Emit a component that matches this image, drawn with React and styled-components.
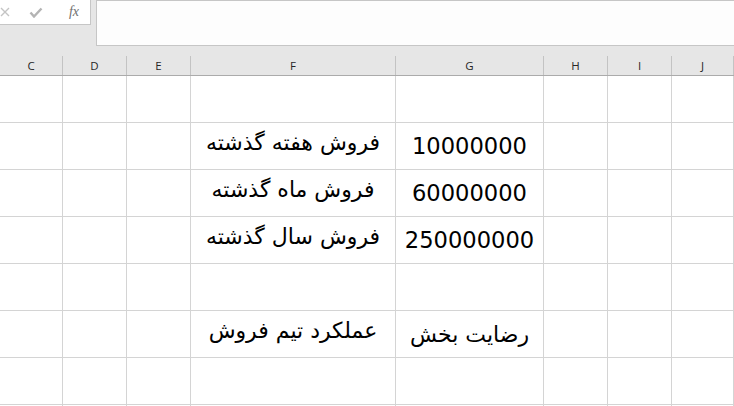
import React from 'react';
import styled, { createGlobalStyle } from 'styled-components';

const GlobalStyle = createGlobalStyle`
  html, body {
    margin: 0;
    padding: 0;
    background: #ffffff;
    overflow: hidden;
  }
`;

const columns = [
  { name: 'C', width: 63 },
  { name: 'D', width: 64 },
  { name: 'E', width: 64 },
  { name: 'F', width: 205 },
  { name: 'G', width: 148 },
  { name: 'H', width: 64 },
  { name: 'I', width: 64 },
  { name: 'J', width: 62 },
];

const template = columns.map((c) => `${c.width}px`).join(' ');

const rows = [
  {},
  { F: 'فروش هفته گذشته', G: '10000000' },
  { F: 'فروش ماه گذشته', G: '60000000' },
  { F: 'فروش سال گذشته', G: '250000000' },
  {},
  { F: 'عملکرد تیم فروش', G: 'رضایت بخش' },
  {},
  {},
];

const Sheet = styled.div`
  width: 734px;
  height: 406px;
  overflow: hidden;
  background: #ffffff;
`;

const FormulaArea = styled.div`
  display: flex;
  gap: 5px;
  height: 46px;
  background: #e6e6e6;
`;

const ButtonBox = styled.div`
  display: flex;
  align-items: center;
  width: 90px;
  height: 24px;
  background: #ffffff;
  border-right: 1px solid #c6c6c6;
  border-bottom: 1px solid #c6c6c6;
`;

const BarButton = styled.span`
  width: ${(p) => p.w || 34}px;
  display: flex;
  justify-content: center;
  align-items: center;
`;

const Fx = styled.span`
  font-family: 'Liberation Serif', 'DejaVu Serif', serif;
  font-style: italic;
  font-size: 14px;
  color: #707070;
`;

const FormulaInput = styled.div`
  flex: 1;
  height: 44px;
  background: #fdfdfd;
  border: 1px solid #c6c6c6;
  border-right: none;
`;

const Grid = styled.div`
  display: grid;
  grid-template-columns: ${template};
`;

const HeaderCell = styled.div`
  height: 19px;
  padding-top: 10px;
  background: #e6e6e6;
  border-bottom: 1px solid #ababab;
`;

const HeaderLabel = styled.div`
  height: 19px;
  border-right: 1px solid #c3c3c3;
  display: flex;
  align-items: center;
  justify-content: center;
  font-family: 'Open Sans', 'Liberation Sans', sans-serif;
  font-size: 11.5px;
  color: #262626;
`;

const Cell = styled.div`
  height: 46px;
  border-right: 1px solid #d4d4d4;
  border-bottom: 1px solid #d4d4d4;
  display: flex;
  align-items: center;
  justify-content: center;
  font-family: 'DejaVu Sans', sans-serif;
  font-size: 22px;
  color: #000000;
  white-space: nowrap;
  overflow: hidden;
`;

const Text = styled.span`
  direction: ${(p) => (p.$rtl ? 'rtl' : 'ltr')};
  font-size: ${(p) => (p.$rtl ? 22 : 22.6)}px;
  position: relative;
  top: ${(p) => p.$shift || 0}px;
`;

const isRtl = (s) => /[\u0600-\u06FF]/.test(s);

const CrossIcon = () => (
  <svg width="10" height="10" viewBox="0 0 10 10">
    <path d="M1 1 L9 9 M9 1 L1 9" stroke="#c4c4c4" strokeWidth="1.4" fill="none" />
  </svg>
);

const CheckIcon = () => (
  <svg width="14" height="11" viewBox="0 0 14 11">
    <path d="M1.5 5.5 L5 9.5 L12.5 1.5" stroke="#b4b4b4" strokeWidth="2.4" fill="none" />
  </svg>
);

export default function App() {
  return (
    <Sheet>
      <GlobalStyle />
      <FormulaArea>
        <ButtonBox>
          <BarButton w={10}>
            <CrossIcon />
          </BarButton>
          <BarButton w={52}>
            <CheckIcon />
          </BarButton>
          <BarButton w={24}>
            <Fx>fx</Fx>
          </BarButton>
        </ButtonBox>
        <FormulaInput />
      </FormulaArea>
      <Grid>
        {columns.map((c) => (
          <HeaderCell key={c.name}>
            <HeaderLabel>{c.name}</HeaderLabel>
          </HeaderCell>
        ))}
        {rows.map((r, i) =>
          columns.map((c) => {
            const v = r[c.name];
            return (
              <Cell key={`${i}-${c.name}`}>
                {v && (
                  <Text $rtl={isRtl(v)} $shift={c.name === 'F' ? -4 : 0}>
                    {v}
                  </Text>
                )}
              </Cell>
            );
          })
        )}
      </Grid>
    </Sheet>
  );
}
